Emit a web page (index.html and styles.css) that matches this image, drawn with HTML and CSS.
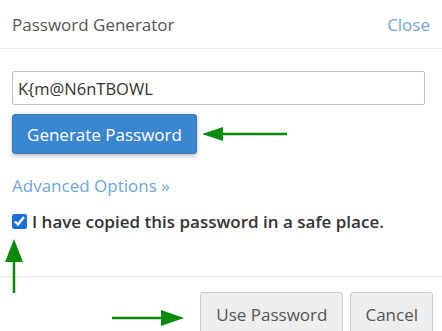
FILE: index.html
```html
<!DOCTYPE html>
<html lang="en">
<head>
    <meta charset="UTF-8">
    <title>Password Generator</title>
    <link rel="stylesheet" href="styles.css">
</head>
<body>
    <div class="modal">
        <!-- Header -->
        <div class="modal-header">
            <span class="modal-title">Password Generator</span>
            <a class="close-link" href="#">Close</a>
        </div>

        <!-- Body -->
        <div class="modal-body">
            <input class="pw-field" type="text" value="K{m@N6nTBOWL">
            <div class="gen-row">
                <button class="btn btn-primary">Generate Password</button>
                <svg class="arrow" width="90" height="16" viewBox="0 0 90 16">
                    <line x1="18" y1="8" x2="85" y2="8" stroke="#0a8a0a" stroke-width="2.5"/>
                    <polygon points="0,8 21,1 21,15" fill="#0a8a0a"/>
                </svg>
            </div>
            <a class="adv-link" href="#">Advanced Options &raquo;</a>
            <label class="confirm">
                <input type="checkbox" class="checkbox" checked>
                I have copied this password in a safe place.
            </label>
            <svg class="arrow-up" width="18" height="55" viewBox="0 0 18 55">
                <polygon points="9,0 0,23 18,23" fill="#0a8a0a"/>
                <line x1="9" y1="20" x2="9" y2="54" stroke="#0a8a0a" stroke-width="2.5"/>
            </svg>
        </div>

        <!-- Footer -->
        <div class="modal-footer">
            <svg class="arrow" width="74" height="16" viewBox="0 0 74 16">
                <line x1="0" y1="8" x2="52" y2="8" stroke="#0a8a0a" stroke-width="2.5"/>
                <polygon points="72,8 49,0 49,16" fill="#0a8a0a"/>
            </svg>
            <button class="btn btn-default btn-wide">Use Password</button>
            <button class="btn btn-default">Cancel</button>
        </div>
    </div>
</body>
</html>
```

FILE: styles.css
```css
body {
    margin: 0;
    font-family: "Open Sans", Arial, sans-serif;
    background: #ffffff;
    color: #333333;
}
.modal {
    width: 442px;
    height: 331px;
    overflow: hidden;
}
.modal-header {
    display: flex;
    justify-content: space-between;
    align-items: center;
    height: 48px;
    padding: 0 12px;
    border-bottom: 1px solid #ececec;
    font-size: 17px;
}
.modal-title {
    color: #555555;
}
.close-link {
    color: #6ea5da;
    text-decoration: none;
}
.modal-body {
    position: relative;
    padding: 22px 12px 0 12px;
    height: 205px;
    border-bottom: 1px solid #e6e6e6;
}
.pw-field {
    display: block;
    box-sizing: border-box;
    width: 413px;
    height: 34px;
    margin: 0;
    padding: 0 5px;
    border: 1px solid #c4c4c4;
    border-radius: 2px;
    font-family: "Open Sans", Arial, sans-serif;
    font-size: 16.5px;
    color: #333333;
    outline: none;
}
.gen-row {
    display: flex;
    align-items: center;
    gap: 5px;
    margin-top: 9px;
}
.btn {
    font-family: "Open Sans", Arial, sans-serif;
    font-size: 17px;
    border-radius: 3px;
    cursor: pointer;
}
.btn-primary {
    width: 185px;
    height: 40px;
    padding: 0;
    background: #3a87cf;
    border: 1px solid #347cbf;
    color: #ffffff;
    box-shadow: 0 2px 4px rgba(0, 0, 0, 0.25);
}
.arrow {
    display: block;
}
.adv-link {
    display: block;
    margin-top: 20px;
    color: #6ea5da;
    text-decoration: none;
    font-size: 17px;
}
.confirm {
    display: flex;
    align-items: center;
    gap: 5px;
    margin-top: 13px;
    font-size: 17px;
    font-weight: 600;
    color: #333333;
}
.checkbox {
    width: 15px;
    height: 15px;
    margin: 0;
    accent-color: #1a6fd8;
}
.arrow-up {
    position: absolute;
    left: 5px;
    top: 190px;
}
.modal-footer {
    display: flex;
    justify-content: flex-end;
    align-items: flex-start;
    gap: 7px;
    padding: 15px 9px 0 0;
}
.modal-footer .arrow {
    margin: 18px 7px 0 0;
}
.btn-default {
    height: 44px;
    padding: 0 14px;
    background: #eeeeee;
    border: 1px solid #cccccc;
    color: #555555;
}
.btn-wide {
    padding: 0 15px;
}
```
